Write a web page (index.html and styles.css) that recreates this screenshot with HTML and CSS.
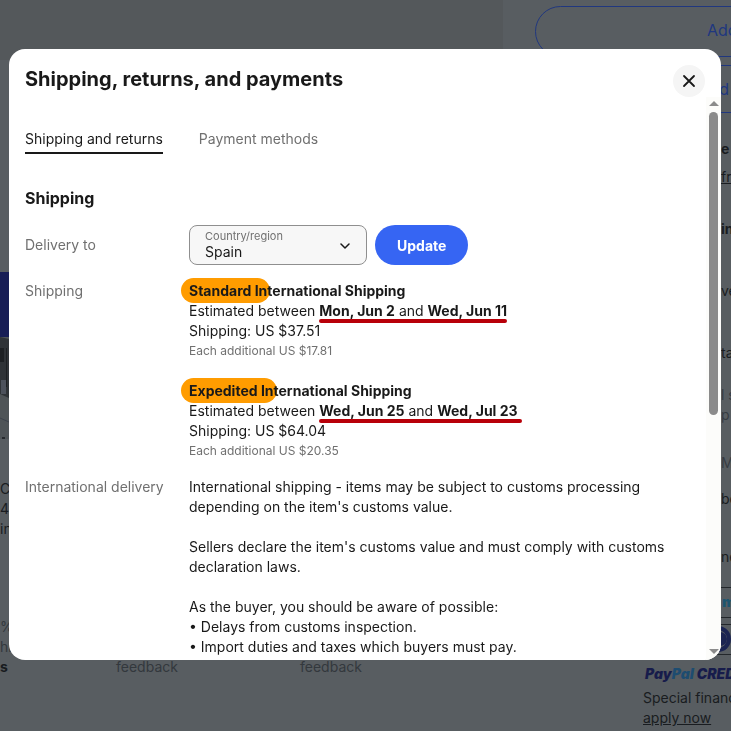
FILE: index.html
```html
<!DOCTYPE html>
<html lang="en">

<head>
  <meta charset="UTF-8">
  <meta name="viewport" content="width=device-width, initial-scale=1.0">
  <title>Shipping, returns, and payments</title>
  <link rel="stylesheet" href="styles.css">
</head>

<body>
  <!-- Item page, dimmed behind the dialog -->
  <div class="page" aria-hidden="true">
    <div class="page-main">
      <div class="gallery"></div>
      <div class="related">
        <svg class="thumb" viewBox="0 0 9 167" preserveAspectRatio="none">
          <rect width="9" height="167" fill="#4f5457"/>
          <rect width="9" height="65" fill="#171d55"/>
          <path d="M0 65 L9 67 V126 L0 122Z" fill="#2f3337"/>
          <path d="M0 76 H4 V90 H0Z M6 76 H7 V115 H6Z" fill="#1d2023"/>
          <path d="M1 108 H6 V122 H1Z" fill="#4d525c"/>
          <path d="M0 146 L9 150" stroke="#3d424c" fill="none"/>
          <path d="M2 165 H5 V167 H2Z" fill="#26292d"/>
        </svg>
        <p class="related-text">Co<br>4<br>in</p>
      </div>
      <div class="feedback">
        <p>%<br>hi<br><b>s</b></p>
        <p>feedback</p>
        <p>feedback</p>
      </div>
    </div>
    <div class="page-side">
      <button class="side-btn side-btn-cart" type="button" tabindex="-1">Add to cart</button>
      <button class="side-btn side-btn-watch" type="button" tabindex="-1">Add to Watchlist</button>
      <div class="side-info">
        <p class="gap-8"><b>e</b></p>
        <p class="gap-32"><u>from</u></p>
        <p class="gap-42"><b>in</b></p>
        <p class="gap-42">ve</p>
        <p class="gap-22">ta</p>
        <p class="muted">l s</p>
        <p class="gap-28 muted">p</p>
        <p class="gap-16 muted">M</p>
        <p class="gap-38">be</p>
        <p>ne</p>
      </div>
      <div class="pay-card pay-amex">m</div>
      <div class="pay-card">
        <svg width="28" height="29" viewBox="0 0 28 29">
          <circle cx="14" cy="14" r="13" fill="#1b2452"/>
          <circle cx="14" cy="14" r="9" fill="#5a5f63"/>
          <path d="M12 7 A7 7 0 0 0 12 21Z M16 7 A7 7 0 0 1 16 21Z" fill="#1b2452"/>
        </svg>
      </div>
      <div class="credit">
        <p class="paypal">Pay<span>Pal</span> CREDIT</p>
        <p>Special financing</p>
        <p><a href="#" tabindex="-1">apply now</a></p>
      </div>
    </div>
  </div>

  <div class="overlay">
    <div class="dialog" role="dialog" aria-labelledby="dialog-title">
      <div class="dialog-header">
        <h1 id="dialog-title">Shipping, returns, and payments</h1>
        <button class="close-btn" type="button" aria-label="Close">
          <svg width="14" height="14" viewBox="0 0 14 14">
            <path d="M2 2 L12 12 M12 2 L2 12" fill="none" stroke="#191919" stroke-width="1.8" stroke-linecap="round"/>
          </svg>
        </button>
      </div>

      <div class="dialog-body">
        <div class="content">
          <div class="tabs" role="tablist">
            <button class="tab active" type="button" role="tab" aria-selected="true">Shipping and returns</button>
            <button class="tab" type="button" role="tab" aria-selected="false">Payment methods</button>
          </div>

          <h2>Shipping</h2>

          <dl class="details">
            <dt class="label-center">Delivery to</dt>
            <dd class="delivery">
              <div class="select-box">
                <label for="country">Country/region</label>
                <select id="country">
                  <option>Spain</option>
                </select>
                <svg class="chevron" width="10" height="6" viewBox="0 0 10 6">
                  <path d="M1 1 L5 5 L9 1" fill="none" stroke="#191919" stroke-width="1.5" stroke-linecap="round" stroke-linejoin="round"/>
                </svg>
              </div>
              <button class="update-btn" type="button">Update</button>
            </dd>

            <dt>Shipping</dt>
            <dd class="services">
              <div class="service">
                <p><b class="marked">Standard In</b><b>ternational Shipping</b></p>
                <p>Estimated between <span class="dates"><b>Mon, Jun 2</b> and <b>Wed, Jun 11</b></span></p>
                <p>Shipping: US $37.51</p>
                <p class="extra">Each additional US $17.81</p>
              </div>
              <div class="service">
                <p><b class="marked">Expedited In</b><b>ternational Shipping</b></p>
                <p>Estimated between <span class="dates wide"><b>Wed, Jun 25</b> and <b>Wed, Jul 23</b></span></p>
                <p>Shipping: US $64.04</p>
                <p class="extra">Each additional US $20.35</p>
              </div>
            </dd>

            <dt>International delivery</dt>
            <dd class="notes">
              <p>International shipping - items may be subject to customs processing depending on the item's customs value.</p>
              <p>Sellers declare the item's customs value and must comply with customs declaration laws.</p>
              <p>As the buyer, you should be aware of possible:<br>
                • Delays from customs inspection.<br>
                • Import duties and taxes which buyers must pay.</p>
            </dd>
          </dl>
        </div>

        <div class="scrollbar">
          <svg width="10" height="5" viewBox="0 0 10 5"><path d="M5 0 L10 5 H0Z" fill="#8b8b8b"/></svg>
          <div class="track"><div class="thumb-bar"></div></div>
          <svg width="10" height="5" viewBox="0 0 10 5"><path d="M0 0 H10 L5 5Z" fill="#8b8b8b"/></svg>
        </div>
      </div>
    </div>
  </div>
</body>

</html>
```

FILE: styles.css
```css
* {
  box-sizing: border-box;
}

body {
  margin: 0;
  height: 100vh;
  overflow: hidden;
  background: #585d61;
  color: #191919;
  font-family: Inter, "Liberation Sans", sans-serif;
  font-size: 14px;
  line-height: 20px;
}

h1,
h2,
p,
dl,
dd {
  margin: 0;
}

button,
select {
  font-family: inherit;
  color: inherit;
}

/* Item page behind the dialog */
.page {
  display: flex;
  height: 100%;
  overflow: hidden;
  color: #191c20;
}

.page-main {
  flex: 1;
  min-width: 0;
}

.gallery {
  height: 60px;
  background: #54585b;
}

.related {
  padding-top: 212px;
}

.thumb {
  display: block;
  width: 9px;
  height: 167px;
}

.related-text {
  margin-top: 40px;
}

.feedback {
  display: grid;
  grid-template-columns: 116px 184px 1fr;
  align-items: end;
  margin-top: 78px;
  color: #33383d;
}

.feedback b {
  color: #191c20;
}

.page-side {
  flex: 0 0 228px;
  min-width: 0;
  padding: 6px 0 0 32px;
  white-space: nowrap;
}

.side-btn {
  display: block;
  width: 428px;
  border: 1px solid #20377f;
  border-radius: 26px;
  background: none;
  color: #20377f;
  font-size: 16px;
}

.side-btn-cart {
  height: 51px;
  padding-bottom: 4px;
}

.side-btn-watch {
  height: 48px;
  margin-top: 8px;
  padding-left: 28px;
}

.side-info {
  padding: 26px 0 0 186px;
}

.gap-8 {
  margin-bottom: 8px;
}

.gap-16 {
  margin-bottom: 16px;
}

.gap-22 {
  margin-bottom: 22px;
}

.gap-28 {
  margin-bottom: 28px;
}

.gap-32 {
  margin-bottom: 32px;
}

.gap-38 {
  margin-bottom: 38px;
}

.gap-42 {
  margin-bottom: 42px;
}

.muted {
  color: #363b41;
}

.pay-card {
  width: 48px;
  height: 31px;
  margin: 0 0 6px 168px;
  border: 1px solid #23272b;
  border-radius: 3px;
}

.pay-amex {
  margin-top: 20px;
  padding: 4px 0 0 18px;
  color: #1d5570;
  font-weight: 900;
}

.credit {
  margin: 9px 0 0 108px;
}

.credit a {
  color: inherit;
}

.paypal {
  margin-bottom: 4px;
  padding-left: 2px;
  color: #171c4b;
  font-weight: 900;
  font-style: italic;
}

.paypal span {
  color: #1d4c70;
}

/* Dialog */
.overlay {
  position: fixed;
  inset: 0;
  padding: 49px 10px 71px 9px;
}

.dialog {
  display: flex;
  flex-direction: column;
  height: 100%;
  overflow: hidden;
  border-radius: 16px;
  background: #fff;
}

.dialog-header {
  display: flex;
  justify-content: space-between;
  padding: 16px 16px 0;
}

h1 {
  font-size: 20px;
  line-height: 28px;
}

.close-btn {
  display: flex;
  align-items: center;
  justify-content: center;
  width: 32px;
  height: 32px;
  padding: 0;
  border: none;
  border-radius: 50%;
  background: #f5f5f5;
  cursor: pointer;
}

.dialog-body {
  display: flex;
  flex: 1;
  min-height: 0;
}

.content {
  flex: 1;
  overflow: hidden;
  padding: 28px 16px 0;
}

.tabs {
  display: flex;
  gap: 36px;
}

.tab {
  height: 29px;
  padding: 5px 0 4px;
  border: none;
  border-bottom: 2px solid transparent;
  background: none;
  color: #707070;
  font-size: 14px;
  line-height: 18px;
  cursor: pointer;
}

.tab.active {
  border-bottom-color: #191919;
  color: #191919;
}

h2 {
  margin-top: 34px;
  font-size: 16px;
  line-height: 20px;
}

.details {
  display: grid;
  grid-template-columns: 164px 1fr;
  row-gap: 16px;
  margin-top: 17px;
}

.details dt {
  color: #707070;
}

.label-center {
  align-self: center;
}

.delivery {
  display: flex;
  gap: 8px;
}

.select-box {
  position: relative;
  width: 178px;
  height: 40px;
}

.select-box label {
  position: absolute;
  top: 4px;
  left: 16px;
  color: #707070;
  font-size: 11px;
  line-height: 14px;
  pointer-events: none;
}

.select-box select {
  width: 100%;
  height: 100%;
  padding: 12px 32px 0 15px;
  border: 1px solid #8f8f8f;
  border-radius: 8px;
  background: #f7f7f7;
  font-size: 14px;
  appearance: none;
}

.chevron {
  position: absolute;
  top: 18px;
  right: 17px;
  pointer-events: none;
}

.update-btn {
  height: 40px;
  padding: 0 22px;
  border: none;
  border-radius: 20px;
  background: #3665f3;
  color: #fff;
  font-size: 14px;
  font-weight: 700;
  cursor: pointer;
}

.services {
  display: flex;
  flex-direction: column;
  gap: 20px;
}

.marked {
  margin: 0 -3px 0 -8px;
  padding: 4px 3px 4px 8px;
  border-radius: 13px;
  background: #ff9c00;
}

.marked + b {
  position: relative;
}

.dates {
  position: relative;
}

/* red marker line below the dates */
.dates::after {
  content: "";
  position: absolute;
  right: 0;
  bottom: -4px;
  left: 0;
  height: 4px;
  border-radius: 2px;
  background: #b80009;
}

.dates.wide::after {
  right: -4px;
}

.extra {
  color: #707070;
  font-size: 12px;
}

.notes p + p {
  margin-top: 20px;
}

.scrollbar {
  display: flex;
  flex-direction: column;
  align-items: center;
  width: 15px;
  padding: 4px 0 6px;
  background: #fcfcfa;
}

.track {
  flex: 1;
  width: 9px;
  margin: 6px 0;
}

.thumb-bar {
  height: 57%;
  border-radius: 5px;
  background: #8b8b8b;
}
```
